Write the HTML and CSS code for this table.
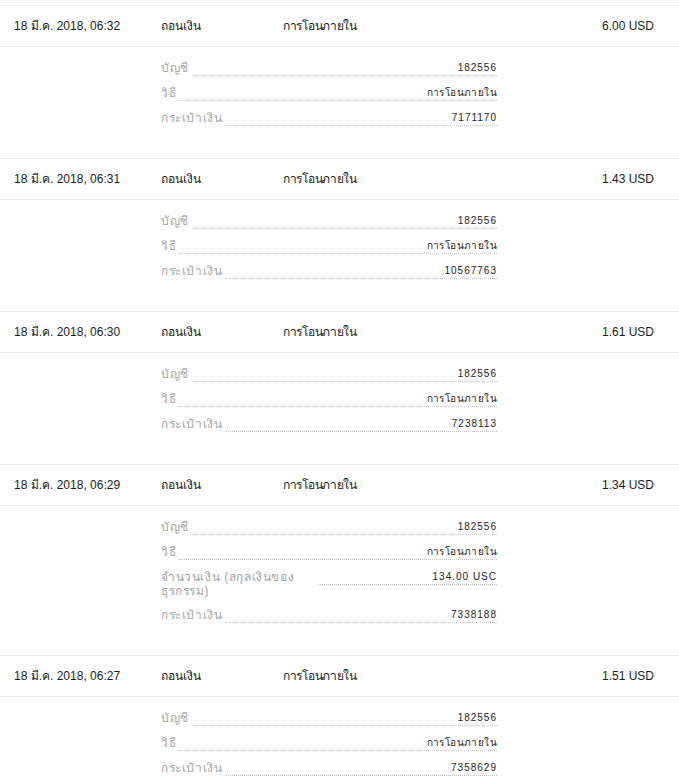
FILE: index.html
```html
<!DOCTYPE html>
<html lang="th">
<head>
<meta charset="utf-8">
<title>ประวัติธุรกรรม</title>
<link rel="stylesheet" href="styles.css">
</head>
<body>
<div class="list">
  <div class="record">
    <div class="head">
      <div class="c-date">18 มี.ค. 2018, 06:32</div>
      <div class="c-type">ถอนเงิน</div>
      <div class="c-method">การโอนภายใน</div>
      <div class="c-amount">6.00 USD</div>
    </div>
    <div class="details">
      <div class="drow"><div class="lbl">บัญชี</div><div class="val">182556</div></div>
      <div class="drow"><div class="lbl">วิธี</div><div class="val val-th">การโอนภายใน</div></div>
      <div class="drow"><div class="lbl">กระเป๋าเงิน</div><div class="val">7171170</div></div>
    </div>
  </div>
  <div class="record">
    <div class="head">
      <div class="c-date">18 มี.ค. 2018, 06:31</div>
      <div class="c-type">ถอนเงิน</div>
      <div class="c-method">การโอนภายใน</div>
      <div class="c-amount">1.43 USD</div>
    </div>
    <div class="details">
      <div class="drow"><div class="lbl">บัญชี</div><div class="val">182556</div></div>
      <div class="drow"><div class="lbl">วิธี</div><div class="val val-th">การโอนภายใน</div></div>
      <div class="drow"><div class="lbl">กระเป๋าเงิน</div><div class="val">10567763</div></div>
    </div>
  </div>
  <div class="record">
    <div class="head">
      <div class="c-date">18 มี.ค. 2018, 06:30</div>
      <div class="c-type">ถอนเงิน</div>
      <div class="c-method">การโอนภายใน</div>
      <div class="c-amount">1.61 USD</div>
    </div>
    <div class="details">
      <div class="drow"><div class="lbl">บัญชี</div><div class="val">182556</div></div>
      <div class="drow"><div class="lbl">วิธี</div><div class="val val-th">การโอนภายใน</div></div>
      <div class="drow"><div class="lbl">กระเป๋าเงิน</div><div class="val">7238113</div></div>
    </div>
  </div>
  <div class="record">
    <div class="head">
      <div class="c-date">18 มี.ค. 2018, 06:29</div>
      <div class="c-type">ถอนเงิน</div>
      <div class="c-method">การโอนภายใน</div>
      <div class="c-amount">1.34 USD</div>
    </div>
    <div class="details">
      <div class="drow"><div class="lbl">บัญชี</div><div class="val">182556</div></div>
      <div class="drow"><div class="lbl">วิธี</div><div class="val val-th">การโอนภายใน</div></div>
      <div class="drow"><div class="lbl lbl-wide">จำนวนเงิน (สกุลเงินของ<br>ธุรกรรม)</div><div class="val">134.00 USC</div></div>
      <div class="drow"><div class="lbl">กระเป๋าเงิน</div><div class="val">7338188</div></div>
    </div>
  </div>
  <div class="record">
    <div class="head">
      <div class="c-date">18 มี.ค. 2018, 06:27</div>
      <div class="c-type">ถอนเงิน</div>
      <div class="c-method">การโอนภายใน</div>
      <div class="c-amount">1.51 USD</div>
    </div>
    <div class="details">
      <div class="drow"><div class="lbl">บัญชี</div><div class="val">182556</div></div>
      <div class="drow"><div class="lbl">วิธี</div><div class="val val-th">การโอนภายใน</div></div>
      <div class="drow"><div class="lbl">กระเป๋าเงิน</div><div class="val">7358629</div></div>
    </div>
  </div>
</div>
</body>
</html>
```
FILE: styles.css
```css
html, body {
  margin: 0;
  padding: 0;
  background: #fff;
}
body {
  padding-top: 5px;
  font-family: "Liberation Sans", Arial, "Noto Sans", sans-serif;
  color: #1a1a1a;
}
.record {
  border-top: 1px solid #ebebeb;
}
.head {
  display: flex;
  align-items: center;
  height: 39px;
  padding: 0 25px 1px 14px;
  border-bottom: 1px solid #ebebeb;
  font-size: 12px;
  line-height: 14px;
}
.c-date { width: 147px; }
.c-type { width: 122px; }
.c-method { flex: 1; letter-spacing: -0.3px; }
.c-amount { text-align: right; }
.details {
  margin-left: 161px;
  width: 336px;
  padding: 14px 0 22px;
}
.drow {
  display: flex;
  align-items: flex-start;
  margin-bottom: 10px;
  font-size: 12px;
  line-height: 14px;
}
.lbl {
  color: #a3a3a3;
  letter-spacing: 0.6px;
  padding-right: 3px;
  white-space: nowrap;
}
.lbl-wide {
  width: 154px;
  white-space: normal;
}
.val {
  flex: 1;
  text-align: right;
  border-bottom: 1px dotted #c4c4c4;
  font-size: 10px;
  letter-spacing: 1px;
  color: #222;
  line-height: 14px;
}
.val-th {
  letter-spacing: 0.4px;
}
```
